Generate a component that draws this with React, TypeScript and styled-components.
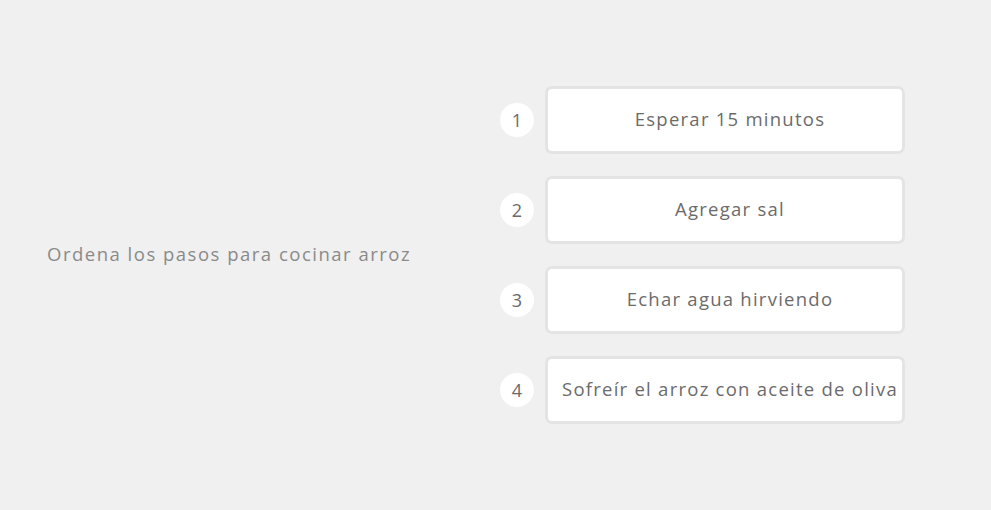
import React from "react";
import styled, { createGlobalStyle } from "styled-components";

const Global = createGlobalStyle`
  html, body { margin: 0; padding: 0; background: #f0f0f0; }
  body { font-family: "Open Sans", "Noto Sans", sans-serif; }
`;

const Page = styled.main`
  min-height: 510px;
  display: flex;
  align-items: center;
  box-sizing: border-box;
  padding: 0 0 0 47px;
`;

const Prompt = styled.h1`
  margin: 0;
  width: 453px;
  padding-bottom: 4px;
  font-size: 18.5px;
  font-weight: 400;
  letter-spacing: 1.5px;
  color: #8a8a8a;
`;

const List = styled.ol`
  list-style: none;
  margin: 0;
  padding: 0;
  display: flex;
  flex-direction: column;
  gap: 22px;
`;

const Row = styled.li`
  display: flex;
  align-items: center;
  gap: 11px;
`;

const Badge = styled.span`
  width: 34px;
  height: 34px;
  border-radius: 50%;
  background: #ffffff;
  display: flex;
  align-items: center;
  justify-content: center;
  font-size: 18px;
  color: #6a6a6a;
`;

const Card = styled.div`
  box-sizing: border-box;
  width: 360px;
  height: 68px;
  background: #ffffff;
  border: 3px solid #e4e4e4;
  border-radius: 7px;
  display: flex;
  align-items: center;
  justify-content: center;
  padding: 0 0 4px 10px;
  font-size: 18.5px;
  letter-spacing: 1.25px;
  color: #6b6b6b;
  white-space: nowrap;
`;

const steps = [
  "Esperar 15 minutos",
  "Agregar sal",
  "Echar agua hirviendo",
  "Sofreír el arroz con aceite de oliva",
];

export default function App() {
  return (
    <>
      <Global />
      <Page>
        <Prompt>Ordena los pasos para cocinar arroz</Prompt>
        <List>
          {steps.map((s, i) => (
            <Row key={s}>
              <Badge>{i + 1}</Badge>
              <Card>{s}</Card>
            </Row>
          ))}
        </List>
      </Page>
    </>
  );
}
